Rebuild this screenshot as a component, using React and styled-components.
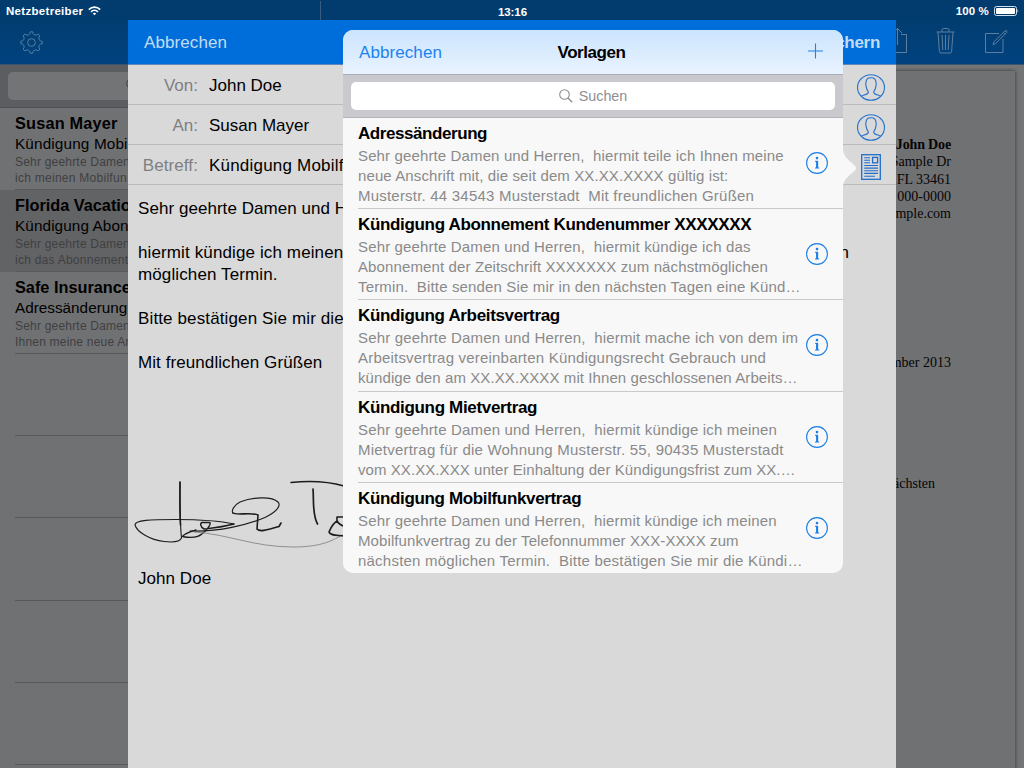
import React from "react";
import styled, { createGlobalStyle, css } from "styled-components";

const Global = createGlobalStyle`
  * { box-sizing: border-box; }
  html, body { margin: 0; padding: 0; overflow: hidden; }
  body { font-family: "Liberation Sans", Arial, sans-serif; color: #000; }
  svg { display: block; flex: none; overflow: visible; }
`;

const text = css`
  white-space: pre;
  letter-spacing: ${(p) => p.$ls || 0}px;
`;

const Screen = styled.div`
  position: relative;
  width: 1024px;
  height: 768px;
  overflow: hidden;
  background: #707173;
  display: flex;
  flex-direction: column;
`;

const StatusBar = styled.header`
  height: 20px;
  flex: none;
  display: grid;
  grid-template-columns: 320px 1fr 320px;
  align-items: center;
  background: #023c6e;
  color: #fff;
  font-size: 11.5px;
  font-weight: bold;
  line-height: 20px;
`;
const StatusLeft = styled.div`
  display: flex;
  align-items: center;
  gap: 5px;
  padding: 1px 0 0 6px;
  height: 20px;
`;
const StatusTime = styled.div`
  height: 20px;
  padding-top: 1px;
  border-left: 1px solid #3a5c7e;
  text-align: center;
  ${text}
`;
const StatusRight = styled.div`
  display: flex;
  align-items: center;
  justify-content: flex-end;
  gap: 5px;
  padding: 1px 5px 0 0;
`;
const Label = styled.span`${text}`;

const Main = styled.div`
  flex: 1;
  display: grid;
  grid-template-columns: 320px 1fr;
  min-height: 0;
`;

const Sidebar = styled.aside`
  display: flex;
  flex-direction: column;
  background: #707173;
  overflow: hidden;
`;
const NavBar = styled.div`
  height: 45px;
  flex: none;
  display: flex;
  align-items: center;
  justify-content: ${(p) => (p.$end ? "flex-end" : "flex-start")};
  gap: 29px;
  padding: ${(p) => (p.$end ? "0 16px 3px 0" : "1px 0 0 20px")};
  background: linear-gradient(#023d70, #00427f);
  border-bottom: 1px solid #3b5570;
`;
const SidebarSearch = styled.div`
  height: 43px;
  flex: none;
  padding: 7px 8px 8px;
  background: #5c5d60;
  border-bottom: 1px solid #4f5053;
`;
const SidebarField = styled.div`
  height: 28px;
  border-radius: 5px;
  background: #737476;
  padding: 6px 0 0 118px;
`;
const MailRow = styled.div`
  height: 82.1px;
  flex: none;
  padding-left: 15px;
  background: ${(p) => (p.$selected ? "#626365" : "transparent")};
`;
const MailInner = styled.div`
  height: 100%;
  padding-top: 5px;
  border-bottom: 1px solid #58595c;
`;
const MailName = styled.div`
  font-size: 16.3px;
  font-weight: bold;
  line-height: 20px;
  margin-bottom: 1px;
  ${text}
`;
const MailSubject = styled.div`
  font-size: 15.3px;
  line-height: 20px;
  ${text}
`;
const MailPreview = styled.div`
  font-size: 12px;
  line-height: 16px;
  color: #3f4042;
  ${text}
`;

const Detail = styled.section`
  display: flex;
  flex-direction: column;
`;
const Desk = styled.div`
  flex: 1;
  padding: 6px 9px 0 9px;
  background: #747577;
`;
const Paper = styled.article`
  height: 720px;
  padding: 65px 64px 0 0;
  background: #707173;
  box-shadow: 0 0 4px rgba(0, 0, 0, 0.55);
  font-family: "Liberation Serif", "Times New Roman", serif;
  font-size: 14px;
  color: #050505;
  text-align: right;
`;
const PaperLine = styled.div`
  line-height: 17.3px;
  font-weight: ${(p) => (p.$bold ? "bold" : "normal")};
  margin-top: ${(p) => p.$gap || 0}px;
  padding-right: ${(p) => p.$inset || 0}px;
  ${text}
`;

const Modal = styled.section`
  position: absolute;
  left: 128px;
  top: 20px;
  width: 768px;
  height: 748px;
  background: #d9d9d9;
`;
const ModalHeader = styled.div`
  height: 45px;
  display: flex;
  align-items: center;
  justify-content: space-between;
  padding: 1px 16px 0;
  background: #006eda;
  border-bottom: 1px solid #5f89b8;
  font-size: 17px;
  color: #c3dcf4;
`;
const SaveLabel = styled.span`
  font-weight: bold;
  ${text}
`;
const FieldRow = styled.div`
  height: 40px;
  display: flex;
  align-items: center;
  padding: 2px 10px 0 0;
  border-bottom: 1px solid #bbbbbe;
  font-size: 17px;
`;
const FieldName = styled.span`
  width: 70px;
  margin-right: 11px;
  text-align: right;
  color: #7f7f82;
  ${text}
`;
const FieldValue = styled.span`
  flex: 1;
  ${text}
`;
const FieldIcon = styled.div`
  width: 30px;
  padding-top: 3px;
  display: flex;
  justify-content: center;
`;
const Letter = styled.div`
  padding: 13px 47px 0 10px;
  font-size: 17px;
  line-height: 22px;
`;
const LetterLine = styled.div`
  height: 22px;
  display: flex;
  justify-content: space-between;
  ${text}
`;
const Signature = styled.div`
  height: 194px;
  padding: 106px 0 0 0;
  margin-left: -10px;
`;

const Popover = styled.section`
  position: absolute;
  left: 343px;
  top: 30px;
  width: 500px;
  height: 543px;
  border-radius: 10px;
  background: #f8f8f8;
`;
const PopClip = styled.div`
  height: 100%;
  border-radius: 10px;
  overflow: hidden;
`;
const Arrow = styled.svg`
  position: absolute;
  left: 500px;
  top: 119px;
`;
const PopHeader = styled.div`
  height: 45px;
  display: grid;
  grid-template-columns: 1fr auto 1fr;
  align-items: center;
  padding: 1px 19px 0 16px;
  background: linear-gradient(#cbe4fe, #e9f3fe);
  border-bottom: 1px solid #a8adb8;
  font-size: 17px;
`;
const Cancel = styled.span`
  color: #1a82f2;
  ${text}
`;
const PopTitle = styled.h1`
  margin: 0;
  font-size: 17px;
  font-weight: bold;
  ${text}
`;
const AddButton = styled.div`
  display: flex;
  justify-content: flex-end;
  padding-bottom: 4px;
`;
const PopSearch = styled.div`
  height: 43px;
  padding: 7px 8px;
  background: #c9c9ce;
  border-bottom: 1px solid #b4b4b9;
`;
const PopField = styled.div`
  height: 28px;
  border-radius: 5px;
  background: #fff;
  display: flex;
  align-items: center;
  justify-content: center;
  gap: 6px;
  font-size: 14.3px;
  color: #8e8e93;
`;
const TemplateRow = styled.div`
  height: 91.2px;
  display: flex;
  margin-left: 15px;
  padding-right: 15px;
  justify-content: space-between;
  border-bottom: 1px solid #c9c9cd;
  &:last-child { border-bottom-color: transparent; }
`;
const TemplateText = styled.div`
  padding-top: 6px;
`;
const TemplateTitle = styled.div`
  font-size: 17px;
  font-weight: bold;
  line-height: 20px;
  margin-bottom: 2px;
  ${text}
`;
const TemplateLine = styled.div`
  font-size: 15px;
  line-height: 20px;
  color: #8a8a8a;
  ${text}
`;
const InfoBox = styled.div`
  display: flex;
  align-items: center;
`;

const WifiIcon = () => (
  <svg width="13" height="10" viewBox="0 0 13 10" fill="none" stroke="#fff" strokeWidth="1.6">
    <path d="M0.8 3.6 C4 0.3 9 0.3 12.2 3.6" />
    <path d="M3 5.8 C5 3.9 8 3.9 10 5.8" />
    <path d="M4.8 7.4 Q6.5 6 8.2 7.4 L6.5 9.2 Z" fill="#fff" stroke="none" />
  </svg>
);
const BatteryIcon = () => (
  <svg width="25" height="10" viewBox="0 0 25 10">
    <rect x="0.5" y="0.5" width="22" height="9" rx="2" fill="none" stroke="#d5dfe8" />
    <rect x="2" y="2" width="19" height="6" rx="0.8" fill="#fff" />
    <path d="M23.6 3 Q25 5 23.6 7 Z" fill="#fff" />
  </svg>
);

const gearPath = (() => {
  const at = (a, r) => `${(12 + r * Math.cos(a)).toFixed(2)} ${(12 + r * Math.sin(a)).toFixed(2)}`;
  let d = "";
  for (let i = 0; i < 8; i++) {
    const a = (i / 8) * Math.PI * 2 - Math.PI / 2;
    d += `${i ? "L" : "M"}${at(a - 0.17, 9.6)}L${at(a - 0.12, 11.2)}L${at(a + 0.12, 11.2)}L${at(a + 0.17, 9.6)}`;
    d += `Q${at(a + 0.39, 7.4)} ${at(a + 0.615, 9.6)}`;
  }
  return `${d}Z`;
})();
const GearIcon = () => (
  <svg width="23" height="23" viewBox="0 0 24 24" fill="none" stroke="#5d7f9f" strokeWidth="1" strokeLinejoin="round">
    <path d={gearPath} />
    <circle cx="12" cy="12" r="4" />
  </svg>
);
const ShareIcon = () => (
  <svg width="19" height="25" viewBox="0 0 19 25" fill="none" stroke="#5d7f9f" strokeWidth="1">
    <path d="M6 6.5H0.5V24.5H18.5V6.5H13" />
    <path d="M9.5 17V0.5M5 5L9.5 0.5L14 5" />
  </svg>
);
const TrashIcon = () => (
  <svg width="19" height="26" viewBox="0 0 19 26" fill="none" stroke="#5d7f9f" strokeWidth="1">
    <path d="M0.5 4H18.5M6 4V2Q6 0.5 7.5 0.5H11.5Q13 0.5 13 2V4" />
    <path d="M2 4L3.4 23.5Q3.5 25 5 25H14Q15.5 25 15.6 23.5L17 4" />
    <path d="M6 7L6.8 22M9.5 7V22M13 7L12.2 22" />
  </svg>
);
const ComposeIcon = () => (
  <svg width="24" height="24" viewBox="0 0 24 24" fill="none" stroke="#5d7f9f" strokeWidth="1">
    <path d="M15 4.5H1.5V23.5H19V10" />
    <path d="M9 15.5L10 12.8L21 1.8L22.7 3.5L11.7 14.5Z M19.4 3.4L21.1 5.1" />
    <path d="M21.8 1L23.5 2.7" />
  </svg>
);
const PersonIcon = () => (
  <svg width="28" height="27" viewBox="0 0 28 27" fill="none" stroke="#2573cb" strokeWidth="1.1">
    <ellipse cx="14" cy="13.5" rx="13.5" ry="12.7" />
    <path d="M4.2 22.2C6 20.8 11.8 20.7 11.3 18C11.1 16.8 9.3 15.5 9.2 12.5C8.4 10.8 8.8 9.8 9 8.5C9 5.3 10.8 3.7 14 3.7C17.2 3.7 19 5.3 19 8.5C19.2 9.8 19.6 10.8 18.8 12.5C18.7 15.5 16.9 16.8 16.7 18C16.2 20.7 22 20.8 23.8 22.2" />
  </svg>
);
const DocIcon = () => (
  <svg width="20" height="26" viewBox="0 0 20 26" fill="none" stroke="#1f6fca" strokeWidth="1.3">
    <rect x="0.7" y="0.7" width="18.6" height="24.6" />
    <rect x="11.6" y="3.4" width="5" height="5.4" />
    <path d="M3.2 3.7H9M3.2 6.2H9M3.2 8.8H9M3.2 11.5H17M3.2 14.1H17M3.2 16.8H17M3.2 19.4H17M3.2 22.2H14" strokeWidth="1.1" />
  </svg>
);
const SearchIcon = ({ color = "#8e8e93" }) => (
  <svg width="14" height="14" viewBox="0 0 14 14" fill="none" stroke={color} strokeWidth="1.1">
    <circle cx="5.5" cy="5.5" r="4.8" />
    <path d="M9 9L13.2 13.2" strokeWidth="1.4" />
  </svg>
);
const PlusIcon = () => (
  <svg width="16" height="16" viewBox="0 0 16 16" stroke="#1a82f2" strokeWidth="1.1">
    <path d="M7.5 0.5V15.5M0 8H15" />
  </svg>
);
const InfoIcon = () => (
  <svg width="22" height="22" viewBox="0 0 22 22" fill="none" stroke="#1a7fe8">
    <circle cx="11" cy="11" r="10.4" strokeWidth="1.1" />
    <circle cx="11" cy="6.1" r="1.3" fill="#1a7fe8" stroke="none" />
    <path d="M11.1 9V16" strokeWidth="2.1" />
    <path d="M9 9.3H12M9 16H13.2" strokeWidth="1" />
  </svg>
);
const SignatureDrawing = () => (
  <svg width="240" height="75" viewBox="0 0 240 75" fill="none" stroke="#1c1c1c" strokeWidth="1.3" strokeLinecap="round" strokeLinejoin="round">
    <path d="M52 2C51.8 25 51.7 40 53.5 58C52 62 45 62.5 36 61.5C22 60 9 52 7 45C7 40 22 39.5 48 39.5C70 39.5 88 40 106 44" strokeWidth="1.1" />
    <path d="M52 2C51.8 20 51.8 34 52.5 45" strokeWidth="1.6" />
    <path d="M106 44C95 47 85 48 76 49C72 47 72 43 74 42.5H82C83 45 78 51 75 53C70 58 62 58 54.5 56.5C57 53 63 51.5 68 50" strokeWidth="1.4" />
    <path d="M62 51C90 52 120 45 138 37C150 31 153 25 150 22C144 16 124 17 112 22C106 25 103 31 105 33" strokeWidth="1.1" />
    <path d="M105 33C108 35.5 124 32 130 35L129 49C132 53 142 49 151 46.5L153 43" strokeWidth="1.6" />
    <path d="M66 52C100 54 125 67 165 67C190 67 203 62 214 55" stroke="#8f8f8f" strokeWidth="1" />
    <path d="M163 2.5C182 0.5 202 2 216 6" strokeWidth="1.5" />
    <path d="M185 9C186 20 184 34 189.5 44" strokeWidth="1.7" />
    <path d="M216 37H209C208 42 211 44 215 46M209 41C204 44 202 50 201 52C202 56 210 55 216 56" strokeWidth="1.6" />
  </svg>
);

const mails = [
  { name: ["Susan Mayer", 0.2], subject: ["Kündigung Mobi", 0.15], lines: [["Sehr geehrte Damen", 0.2], ["ich meinen Mobilfun", 0.27]] },
  { name: ["Florida Vacatio", 0], subject: ["Kündigung Abon", 0.1], lines: [["Sehr geehrte Damen", 0.2], ["ich das Abonnement", 0.25]], selected: true },
  { name: ["Safe Insurance", 0], subject: ["Adressänderung", 0], lines: [["Sehr geehrte Damen", 0.2], ["Ihnen meine neue An", 0.2]] },
  null, null, null, null, null,
];

const templates = [
  {
    title: ["Adressänderung", -0.43],
    lines: [
      ["Sehr geehrte Damen und Herren,  hiermit teile ich Ihnen meine", 0.13],
      ["neue Anschrift mit, die seit dem XX.XX.XXXX gültig ist:", 0.11],
      ["Musterstr. 44 34543 Musterstadt  Mit freundlichen Grüßen", 0.21],
    ],
  },
  {
    title: ["Kündigung Abonnement Kundenummer XXXXXXX", -0.33],
    lines: [
      ["Sehr geehrte Damen und Herren,  hiermit kündige ich das", 0.15],
      ["Abonnement der Zeitschrift XXXXXXX zum nächstmöglichen", 0.12],
      ["Termin.  Bitte senden Sie mir in den nächsten Tagen eine Künd…", 0.15],
    ],
  },
  {
    title: ["Kündigung Arbeitsvertrag", -0.34],
    lines: [
      ["Sehr geehrte Damen und Herren,  hiermit mache ich von dem im", 0.165],
      ["Arbeitsvertrag vereinbarten Kündigungsrecht Gebrauch und", 0.2],
      ["kündige den am XX.XX.XXXX mit Ihnen geschlossenen Arbeits…", 0.09],
    ],
  },
  {
    title: ["Kündigung Mietvertrag", -0.33],
    lines: [
      ["Sehr geehrte Damen und Herren,  hiermit kündige ich meinen", 0.165],
      ["Mietvertrag für die Wohnung Musterstr. 55, 90435 Musterstadt", 0.22],
      ["vom XX.XX.XXX unter Einhaltung der Kündigungsfrist zum XX.…", 0.07],
    ],
  },
  {
    title: ["Kündigung Mobilfunkvertrag", -0.35],
    lines: [
      ["Sehr geehrte Damen und Herren,  hiermit kündige ich meinen", 0.16],
      ["Mobilfunkvertrag zu der Telefonnummer XXX-XXXX zum", 0.1],
      ["nächsten möglichen Termin.  Bitte bestätigen Sie mir die Kündi…", 0.22],
    ],
  },
];

export default function App() {
  return (
    <>
      <Global />
      <Screen>
        <StatusBar>
          <StatusLeft><Label $ls={0.3}>Netzbetreiber</Label><WifiIcon /></StatusLeft>
          <StatusTime $ls={-0.1}>13:16</StatusTime>
          <StatusRight><Label $ls={0.15}>100 %</Label><BatteryIcon /></StatusRight>
        </StatusBar>
        <Main>
          <Sidebar>
            <NavBar><GearIcon /></NavBar>
            <SidebarSearch><SidebarField><SearchIcon color="#48494b" /></SidebarField></SidebarSearch>
            {mails.map((m, i) => (
              <MailRow key={i} $selected={m && m.selected}>
                <MailInner>
                  {m && (
                    <>
                      <MailName $ls={m.name[1]}>{m.name[0]}</MailName>
                      <MailSubject $ls={m.subject[1]}>{m.subject[0]}</MailSubject>
                      {m.lines.map(([l, ls]) => <MailPreview key={l} $ls={ls}>{l}</MailPreview>)}
                    </>
                  )}
                </MailInner>
              </MailRow>
            ))}
          </Sidebar>
          <Detail>
            <NavBar $end><ShareIcon /><TrashIcon /><ComposeIcon /></NavBar>
            <Desk>
              <Paper>
                <PaperLine $bold $ls={-0.15}>John Doe</PaperLine>
                <PaperLine>Sample Dr</PaperLine>
                <PaperLine>FL 33461</PaperLine>
                <PaperLine>000-0000</PaperLine>
                <PaperLine>mple.com</PaperLine>
                <PaperLine $gap={132}>mber 2013</PaperLine>
                <PaperLine $gap={103} $inset={16}>nächsten</PaperLine>
              </Paper>
            </Desk>
          </Detail>
        </Main>

        <Modal>
          <ModalHeader><Label $ls={0.1}>Abbrechen</Label><SaveLabel $ls={-0.3}>Sichern</SaveLabel></ModalHeader>
          <FieldRow><FieldName>Von:</FieldName><FieldValue>John Doe</FieldValue><FieldIcon><PersonIcon /></FieldIcon></FieldRow>
          <FieldRow><FieldName>An:</FieldName><FieldValue>Susan Mayer</FieldValue><FieldIcon><PersonIcon /></FieldIcon></FieldRow>
          <FieldRow><FieldName $ls={0.1}>Betreff:</FieldName><FieldValue $ls={0.2}>Kündigung Mobilf</FieldValue><FieldIcon><DocIcon /></FieldIcon></FieldRow>
          <Letter>
            <LetterLine $ls={0.05}>Sehr geehrte Damen und H</LetterLine>
            <LetterLine />
            <LetterLine $ls={0.12}><span>hiermit kündige ich meinen</span><span>n</span></LetterLine>
            <LetterLine $ls={0.12}>möglichen Termin.</LetterLine>
            <LetterLine />
            <LetterLine $ls={0.13}>Bitte bestätigen Sie mir die</LetterLine>
            <LetterLine />
            <LetterLine $ls={0.08}>Mit freundlichen Grüßen</LetterLine>
            <Signature><SignatureDrawing /></Signature>
            <LetterLine $ls={0.05}>John Doe</LetterLine>
          </Letter>
        </Modal>

        <Popover>
          <PopClip>
            <PopHeader>
              <Cancel $ls={0.08}>Abbrechen</Cancel>
              <PopTitle $ls={-0.45}>Vorlagen</PopTitle>
              <AddButton><PlusIcon /></AddButton>
            </PopHeader>
            <PopSearch><PopField><SearchIcon /><Label>Suchen</Label></PopField></PopSearch>
            {templates.map((t) => (
              <TemplateRow key={t.title[0]}>
                <TemplateText>
                  <TemplateTitle $ls={t.title[1]}>{t.title[0]}</TemplateTitle>
                  {t.lines.map(([line, ls]) => <TemplateLine key={line} $ls={ls}>{line}</TemplateLine>)}
                </TemplateText>
                <InfoBox><InfoIcon /></InfoBox>
              </TemplateRow>
            ))}
          </PopClip>
          <Arrow width="13" height="38" viewBox="0 0 13 38">
            <path d="M0 1C0.5 6 4 10 9 14C12 16.5 13 17.5 13 19C13 20.5 12 21.5 9 24C4 28 0.5 32 0 37Z" fill="#f8f8f8" />
          </Arrow>
        </Popover>
      </Screen>
    </>
  );
}
